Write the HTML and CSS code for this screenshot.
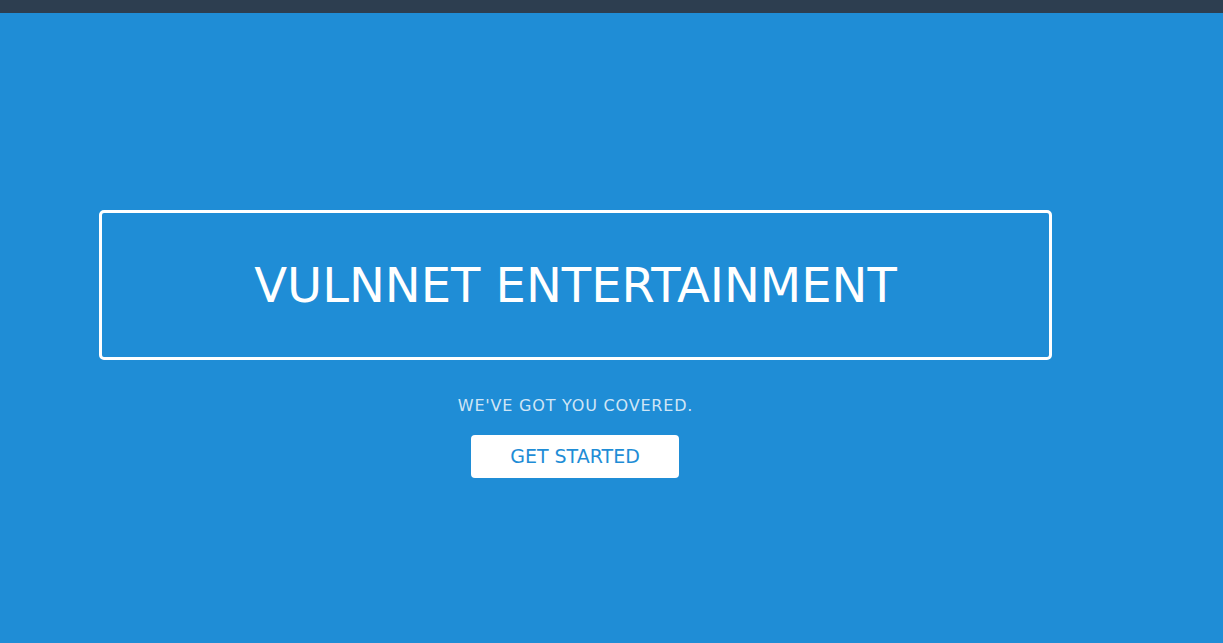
FILE: index.html
```html
<!DOCTYPE html>
<html>
<head>
<meta charset="utf-8">
<link rel="stylesheet" href="styles.css">
</head>
<body>
<div class="topbar"></div>
<main class="hero">
  <div class="splash">
    <h1 class="splash-head">VULNNET ENTERTAINMENT</h1>
    <p class="splash-subhead">WE'VE GOT YOU COVERED.</p>
    <a class="button" href="#">GET STARTED</a>
  </div>
</main>
</body>
</html>
```

FILE: styles.css
```css
html, body {
  margin: 0;
  padding: 0;
  height: 100%;
}
body {
  background: #1f8dd6;
  font-family: "DejaVu Sans", sans-serif;
  color: #fff;
}
.topbar {
  height: 13px;
  background: #2d3e50;
}
.hero {
  padding-top: 197px;
  padding-left: 99px;
}
.splash {
  width: 953px;
  display: flex;
  flex-direction: column;
  align-items: center;
}
.splash-head {
  box-sizing: border-box;
  width: 100%;
  height: 150px;
  margin: 0;
  border: 3px solid #fff;
  border-radius: 5px;
  display: flex;
  align-items: center;
  justify-content: center;
  font-size: 48px;
  font-weight: normal;
  line-height: 1;
}
.splash-subhead {
  margin: 36px 0 0;
  font-size: 16px;
  letter-spacing: 0.05em;
  color: rgba(255,255,255,0.8);
  line-height: 20px;
}
.button {
  margin-top: 19px;
  margin-right: 1px;
  width: 208px;
  height: 43px;
  box-sizing: border-box;
  background: #fff;
  color: #1f8dd6;
  border-radius: 4px;
  text-decoration: none;
  font-size: 19px;
  padding-bottom: 1px;
  display: flex;
  align-items: center;
  justify-content: center;
}
```
